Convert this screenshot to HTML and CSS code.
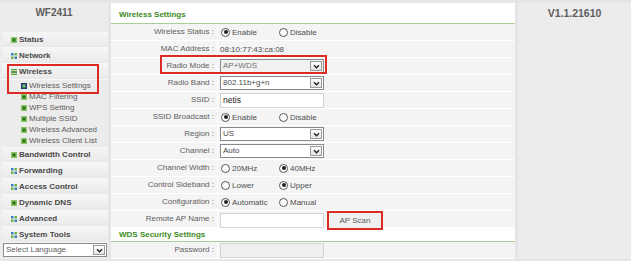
FILE: index.html
```html
<!DOCTYPE html>
<html lang="en">
<head>
  <meta charset="UTF-8" />
  <title>WF2411 - Wireless Settings</title>
  <link rel="stylesheet" href="styles.css">
</head>
<body>
  <div class="page">

    <aside class="sidebar">
      <div class="model">WF2411</div>
      <ul class="menu">
        <li class="item"><svg class="ico" viewBox="0 0 6 6"><rect width="6" height="6" fill="#86c663"/><rect x="1.5" y="1.5" width="3" height="3" fill="#2f6b1e"/></svg>Status</li>
        <li class="item"><svg class="ico" viewBox="0 0 6 6"><rect width="2.5" height="2.5" fill="#3a7cc2"/><rect x="3.5" width="2.5" height="2.5" fill="#6db24d"/><rect y="3.5" width="2.5" height="2.5" fill="#6db24d"/><rect x="3.5" y="3.5" width="2.5" height="2.5" fill="#3a7cc2"/></svg>Network</li>
        <li class="item"><svg class="ico" viewBox="0 0 6 6"><rect width="6" height="1.4" fill="#5aa83a"/><rect y="2.3" width="6" height="1.4" fill="#2f6b1e"/><rect y="4.6" width="6" height="1.4" fill="#5aa83a"/></svg>Wireless</li>
        <li class="subs">
          <ul>
            <li class="sub current"><svg class="ico" viewBox="0 0 6 6"><rect width="6" height="6" fill="#1f3b73"/><rect x="1.5" y="1.5" width="3" height="3" fill="#7cc45a"/></svg>Wireless Settings</li>
            <li class="sub"><svg class="ico" viewBox="0 0 6 6"><rect width="6" height="6" fill="#86c663"/><rect x="1.5" y="1.5" width="3" height="3" fill="#2f6b1e"/></svg>MAC Filtering</li>
            <li class="sub"><svg class="ico" viewBox="0 0 6 6"><rect width="6" height="6" fill="#86c663"/><rect x="1.5" y="1.5" width="3" height="3" fill="#2f6b1e"/></svg>WPS Setting</li>
            <li class="sub"><svg class="ico" viewBox="0 0 6 6"><rect width="6" height="6" fill="#86c663"/><rect x="1.5" y="1.5" width="3" height="3" fill="#2f6b1e"/></svg>Multiple SSID</li>
            <li class="sub"><svg class="ico" viewBox="0 0 6 6"><rect width="6" height="6" fill="#86c663"/><rect x="1.5" y="1.5" width="3" height="3" fill="#2f6b1e"/></svg>Wireless Advanced</li>
            <li class="sub"><svg class="ico" viewBox="0 0 6 6"><rect width="6" height="6" fill="#86c663"/><rect x="1.5" y="1.5" width="3" height="3" fill="#2f6b1e"/></svg>Wireless Client List</li>
          </ul>
        </li>
        <li class="item"><svg class="ico" viewBox="0 0 6 6"><rect width="6" height="6" fill="#86c663"/><rect x="1.5" y="1.5" width="3" height="3" fill="#2f6b1e"/></svg>Bandwidth Control</li>
        <li class="item"><svg class="ico" viewBox="0 0 6 6"><rect width="2.5" height="2.5" fill="#3a7cc2"/><rect x="3.5" width="2.5" height="2.5" fill="#6db24d"/><rect y="3.5" width="2.5" height="2.5" fill="#6db24d"/><rect x="3.5" y="3.5" width="2.5" height="2.5" fill="#3a7cc2"/></svg>Forwarding</li>
        <li class="item"><svg class="ico" viewBox="0 0 6 6"><rect width="2.5" height="2.5" fill="#3a7cc2"/><rect x="3.5" width="2.5" height="2.5" fill="#6db24d"/><rect y="3.5" width="2.5" height="2.5" fill="#6db24d"/><rect x="3.5" y="3.5" width="2.5" height="2.5" fill="#3a7cc2"/></svg>Access Control</li>
        <li class="item"><svg class="ico" viewBox="0 0 6 6"><rect width="6" height="6" fill="#86c663"/><rect x="1.5" y="1.5" width="3" height="3" fill="#2f6b1e"/></svg>Dynamic DNS</li>
        <li class="item"><svg class="ico" viewBox="0 0 6 6"><rect width="2.5" height="2.5" fill="#3a7cc2"/><rect x="3.5" width="2.5" height="2.5" fill="#6db24d"/><rect y="3.5" width="2.5" height="2.5" fill="#6db24d"/><rect x="3.5" y="3.5" width="2.5" height="2.5" fill="#3a7cc2"/></svg>Advanced</li>
        <li class="item"><svg class="ico" viewBox="0 0 6 6"><rect width="2.5" height="2.5" fill="#3a7cc2"/><rect x="3.5" width="2.5" height="2.5" fill="#6db24d"/><rect y="3.5" width="2.5" height="2.5" fill="#6db24d"/><rect x="3.5" y="3.5" width="2.5" height="2.5" fill="#3a7cc2"/></svg>System Tools</li>
      </ul>
      <div class="select lang">
        <span class="select-text">Select Language</span>
        <span class="arrow"><svg viewBox="0 0 8 6"><path d="M1 1.5 L4 4.5 L7 1.5" fill="none" stroke="#222" stroke-width="1.6"/></svg></span>
      </div>
      <div class="mark mark-menu"></div>
    </aside>

    <main class="panel">
      <h2 class="panel-title first">Wireless Settings</h2>

      <div class="row">
        <div class="label">Wireless Status :</div>
        <div class="field">
          <span class="opt"><span class="radio on"></span>Enable</span>
          <span class="opt"><span class="radio"></span>Disable</span>
        </div>
      </div>
      <div class="row">
        <div class="label">MAC Address :</div>
        <div class="field">08:10:77:43:ca:08</div>
      </div>
      <div class="row">
        <div class="label">Radio Mode :</div>
        <div class="field">
          <div class="select grey"><span class="select-text">AP+WDS</span><span class="arrow"><svg viewBox="0 0 8 6"><path d="M1 1.5 L4 4.5 L7 1.5" fill="none" stroke="#222" stroke-width="1.6"/></svg></span></div>
        </div>
      </div>
      <div class="row">
        <div class="label">Radio Band :</div>
        <div class="field">
          <div class="select"><span class="select-text">802.11b+g+n</span><span class="arrow"><svg viewBox="0 0 8 6"><path d="M1 1.5 L4 4.5 L7 1.5" fill="none" stroke="#222" stroke-width="1.6"/></svg></span></div>
        </div>
      </div>
      <div class="row">
        <div class="label">SSID :</div>
        <div class="field"><div class="input dark">netis</div></div>
      </div>
      <div class="row">
        <div class="label">SSID Broadcast :</div>
        <div class="field">
          <span class="opt"><span class="radio on"></span>Enable</span>
          <span class="opt"><span class="radio"></span>Disable</span>
        </div>
      </div>
      <div class="row">
        <div class="label">Region :</div>
        <div class="field">
          <div class="select"><span class="select-text">US</span><span class="arrow"><svg viewBox="0 0 8 6"><path d="M1 1.5 L4 4.5 L7 1.5" fill="none" stroke="#222" stroke-width="1.6"/></svg></span></div>
        </div>
      </div>
      <div class="row">
        <div class="label">Channel :</div>
        <div class="field">
          <div class="select"><span class="select-text">Auto</span><span class="arrow"><svg viewBox="0 0 8 6"><path d="M1 1.5 L4 4.5 L7 1.5" fill="none" stroke="#222" stroke-width="1.6"/></svg></span></div>
        </div>
      </div>
      <div class="row">
        <div class="label">Channel Width :</div>
        <div class="field">
          <span class="opt"><span class="radio"></span>20MHz</span>
          <span class="opt"><span class="radio on"></span>40MHz</span>
        </div>
      </div>
      <div class="row">
        <div class="label">Control Sideband :</div>
        <div class="field">
          <span class="opt"><span class="radio"></span>Lower</span>
          <span class="opt"><span class="radio on"></span>Upper</span>
        </div>
      </div>
      <div class="row">
        <div class="label">Configuration :</div>
        <div class="field">
          <span class="opt"><span class="radio on"></span>Automatic</span>
          <span class="opt"><span class="radio"></span>Manual</span>
        </div>
      </div>
      <div class="row">
        <div class="label">Remote AP Name :</div>
        <div class="field">
          <div class="input"></div>
          <button type="button" class="btn">AP Scan</button>
        </div>
      </div>

      <h2 class="panel-title">WDS Security Settings</h2>
      <div class="row">
        <div class="label">Password :</div>
        <div class="field"><div class="input disabled"></div></div>
      </div>

      <div class="mark mark-mode"></div>
    </main>

    <aside class="version">V1.1.21610</aside>
  </div>
</body>
</html>
```

FILE: styles.css
```css
body {
  margin: 0;
  background: #e5e5e5;
  font-family: "Liberation Sans", Arial, sans-serif;
  font-size: 8px;
  color: #5e5e5e;
}
ul {
  list-style: none;
  margin: 0;
  padding: 0;
}
.page {
  display: flex;
  gap: 3px;
  padding-top: 3px;
  height: 256px;
}

/* sidebar */
.sidebar {
  width: 108px;
  background: #ececec;
  position: relative;
}
.model {
  height: 25px;
  padding-top: 4px;
  line-height: 12px;
  text-align: center;
  font-size: 10px;
  font-weight: bold;
  color: #5e5e5e;
}
.item {
  height: 15px;
  line-height: 15px;
  margin-left: 2px;
  padding-left: 9px;
  border-bottom: 1px solid #f8f8f8;
  background: linear-gradient(#f6f6f6, #e9e9e9);
  font-weight: bold;
  color: #4a4a4a;
  display: flex;
  align-items: center;
}
.ico {
  width: 6px;
  height: 6px;
  margin-right: 2px;
  flex: none;
}
.subs {
  padding: 0 0 1px;
}
.sub {
  height: 11px;
  line-height: 11px;
  padding-left: 21px;
  display: flex;
  align-items: center;
  color: #606060;
}
.select {
  display: flex;
  align-items: center;
  height: 12px;
  width: 102px;
  border: 1px solid #8a8a8a;
  background: #fff;
  color: #4a4a4a;
}
.select.grey {
  background: #f1f1f1;
  color: #707070;
}
.select-text {
  flex: 1;
  padding-left: 2px;
  line-height: 12px;
}
.arrow {
  width: 10px;
  height: 8px;
  margin-right: 1px;
  border: 1px solid #9a9a9a;
  background: linear-gradient(#fdfdfd, #e4e4e4);
  display: flex;
  align-items: center;
  justify-content: center;
}
.arrow svg {
  width: 7px;
  height: 5px;
}
.lang {
  margin-left: 3px;
  width: 102px;
  color: #606060;
}

/* panel */
.panel {
  width: 404px;
  position: relative;
}
.panel-title {
  margin: 0;
  padding: 1px 0 0 8px;
  height: 12px;
  line-height: 12px;
  font-size: 8px;
  font-weight: bold;
  color: #3c8a24;
  background: #fff;
  border-bottom: 1px solid #a8d197;
}
.panel-title.first {
  padding-top: 6px;
  height: 14px;
}
.row {
  display: grid;
  grid-template-columns: 107px 1fr;
  height: 16px;
  border-bottom: 1px solid #fff;
  background: #f4f4f4;
}
.label {
  text-align: right;
  padding-right: 3px;
  line-height: 16px;
  border-right: 1px solid #fff;
  color: #606060;
}
.field {
  display: flex;
  align-items: center;
  padding-left: 2px;
  color: #4e4e4e;
}
.opt {
  display: flex;
  align-items: center;
  width: 57px;
  padding-left: 1px;
}
.radio {
  width: 7px;
  height: 7px;
  border: 1px solid #555;
  border-radius: 50%;
  margin-right: 2px;
  background: #fff;
  position: relative;
}
.radio.on::after {
  content: "";
  position: absolute;
  left: 1.5px;
  top: 1.5px;
  width: 4px;
  height: 4px;
  border-radius: 50%;
  background: #222;
}
.input {
  width: 100px;
  height: 13px;
  line-height: 13px;
  padding-left: 2px;
  border: 1px solid #d4d4d4;
  background: #fff;
}
.input.dark {
  color: #222;
  font-size: 8.5px;
}
.input.disabled {
  background: #efefef;
}
.btn {
  margin-left: 3px;
  width: 56px;
  height: 19px;
  border: 2px solid #dc2b24;
  background: #f0f0f0;
  font-family: "Liberation Sans", Arial, sans-serif;
  font-size: 8px;
  color: #606060;
  padding: 0;
}

/* annotation boxes */
.mark {
  position: absolute;
  border: 2px solid #dc2b24;
  pointer-events: none;
}
.mark-menu {
  left: 7px;
  top: 61px;
  width: 88px;
  height: 26px;
}
.mark-mode {
  left: 49px;
  top: 52px;
  width: 163px;
  height: 15px;
}

/* version column */
.version {
  flex: 1;
  background: #ececec;
  text-align: center;
  padding-top: 4px;
  line-height: 12px;
  font-size: 10.5px;
  font-weight: bold;
  color: #5e5e5e;
}
```
